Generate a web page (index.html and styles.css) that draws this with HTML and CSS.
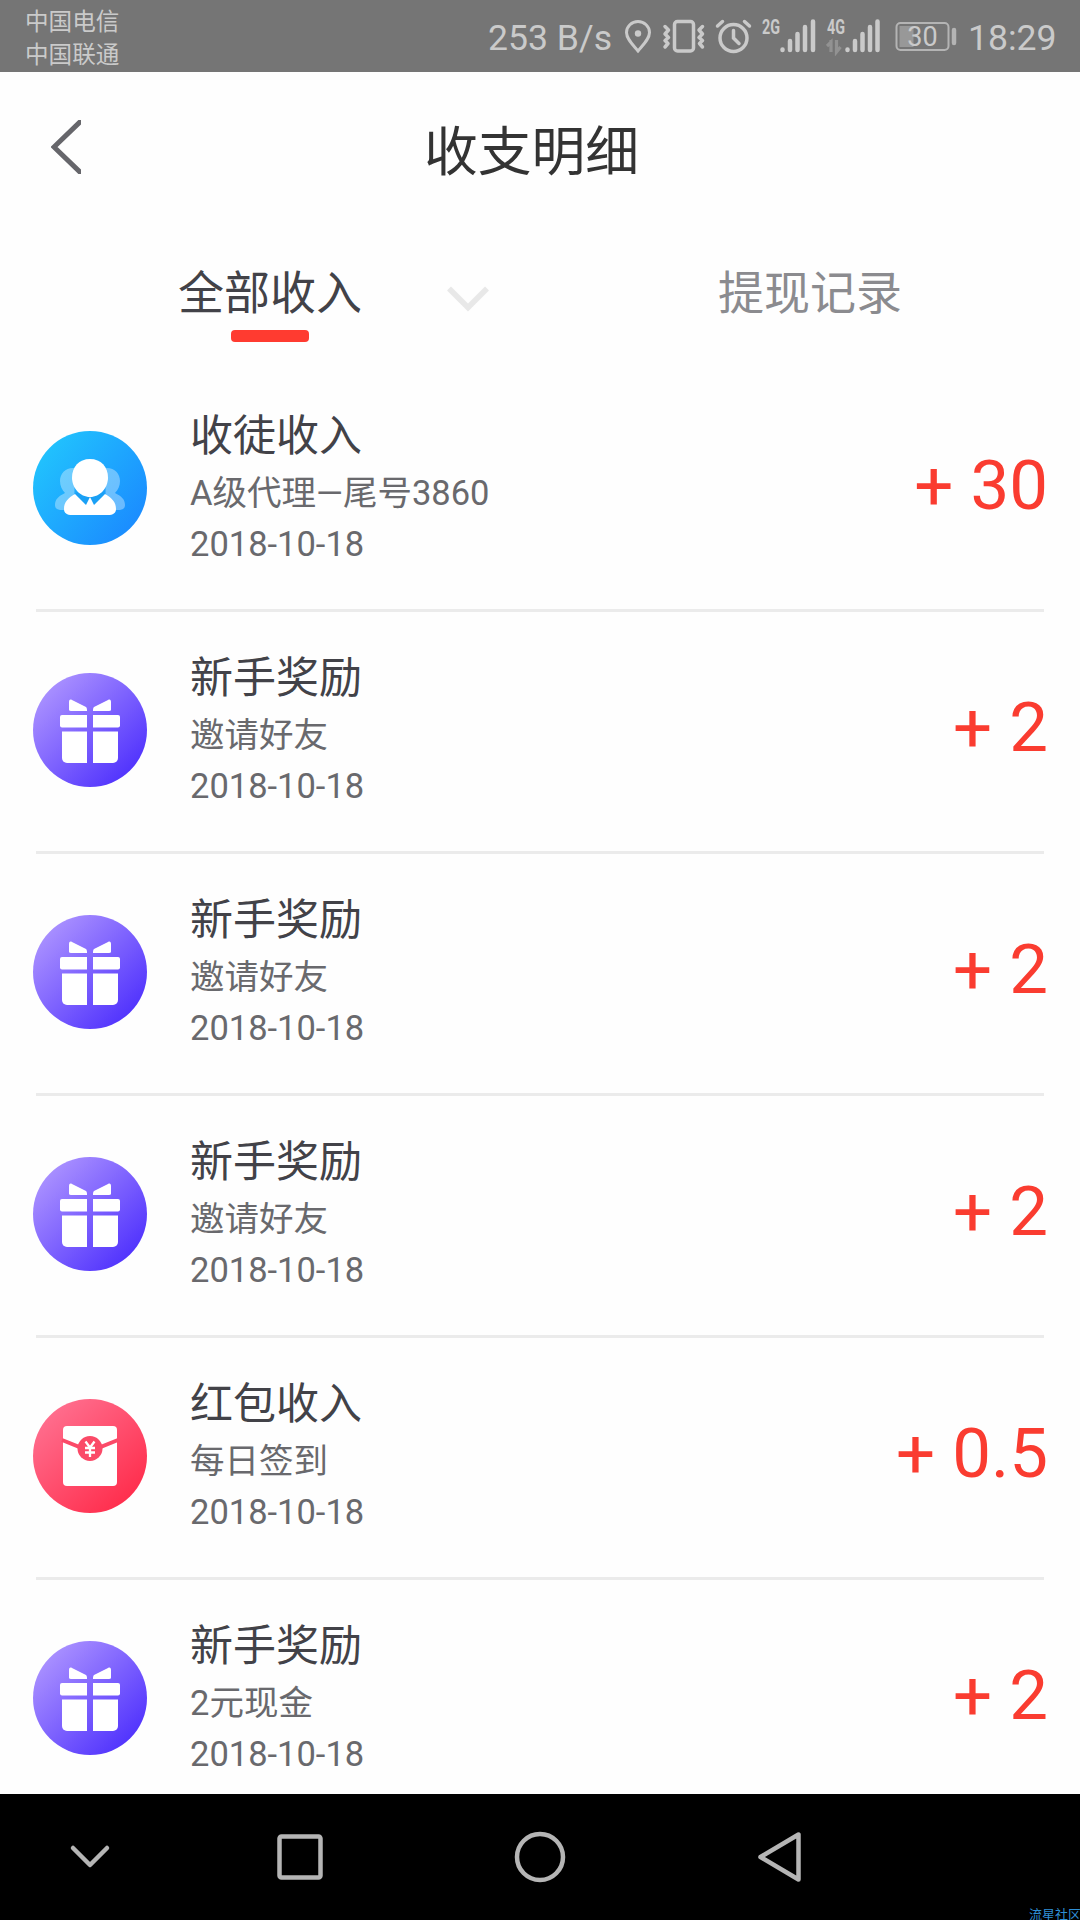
FILE: index.html
```
<!DOCTYPE html>
<html lang="zh-CN">
<head>
  <meta charset="UTF-8" />
  <meta name="viewport" content="width=device-width, initial-scale=1" />
  <title>收支明细</title>
  <link rel="stylesheet" href="styles.css">
</head>
<body>

  <!-- shared icons -->
  <svg class="defs" width="0" height="0">
    <defs>
      <linearGradient id="blue" x1="0" y1="0.1" x2="1" y2="0.9">
        <stop offset="0" stop-color="#22c8fd" />
        <stop offset="1" stop-color="#1a86ff" />
      </linearGradient>
      <linearGradient id="purple" x1="0.1" y1="0.1" x2="0.9" y2="0.9">
        <stop offset="0" stop-color="#ad94ff" />
        <stop offset="1" stop-color="#4d2ffd" />
      </linearGradient>
      <linearGradient id="red" x1="0.1" y1="0.1" x2="0.8" y2="0.9">
        <stop offset="0" stop-color="#ff7090" />
        <stop offset="1" stop-color="#ff2f4e" />
      </linearGradient>
    </defs>
    <symbol id="people" viewBox="0 0 114 114">
      <circle cx="57" cy="57" r="57" fill="url(#blue)" />
      <g fill="#fff" opacity="0.35">
        <path d="M42 37c-9-1-15 5-15 13 0 5 2 9 5 12-6 3-10 6-10 12 0 4 3 5 7 5h12z" />
        <path d="M72 37c9-1 15 5 15 13 0 5-2 9-5 12 6 3 10 6 10 12 0 4-3 5-7 5H73z" />
      </g>
      <path d="M41 64l12 10 4-8 4 8 12-10-6-6H47z" fill="#1aa0f5" />
      <path d="M42 63c-7 4-11 8-11 15 0 4 3 6 8 6h36c5 0 8-2 8-6 0-7-4-11-11-15L61 74l-4-8-4 8z" fill="#fff" />
      <path d="M57 28c11 0 18 8 18 18.500S67 66 57 66 39 57 39 46.500 46 28 57 28z" fill="#fff" />
    </symbol>
    <symbol id="gift" viewBox="0 0 114 114">
      <circle cx="57" cy="57" r="57" fill="url(#purple)" />
      <g fill="#fff">
        <path d="M36 29c0-2 1-3 3-2l14 7c1 1 1 2 1 4H38c-2 0-2-1-2-2z" />
        <path d="M78 29c0-2-1-3-3-2l-14 7c-1 1-1 2-1 4h16c2 0 2-1 2-2z" />
        <path d="M29 42h25v12.500H29a2 2 0 0 1-2-2V44a2 2 0 0 1 2-2z" />
        <path d="M60 42h25a2 2 0 0 1 2 2v8.500a2 2 0 0 1-2 2H60z" />
        <path d="M29 58.500h25V90H34a5 5 0 0 1-5-5z" />
        <path d="M60 58.500h25V85a5 5 0 0 1-5 5H60z" />
      </g>
    </symbol>
    <symbol id="packet" viewBox="0 0 114 114">
      <circle cx="57" cy="57" r="57" fill="url(#red)" />
      <rect x="30" y="27" width="54" height="60" rx="4" fill="#fff" />
      <path d="M29 41l20 8h16l20-8" fill="none" stroke="#fb4a68" stroke-width="4" />
      <circle cx="57" cy="49.500" r="12.500" fill="#fb4a68" />
      <path d="M52.500 42.500l4.500 6 4.500-6M57 48v10M52 49h10M52 53.500h10" fill="none" stroke="#fff" stroke-width="2.300" />
    </symbol>
  </svg>

  <div class="status-bar">
    <div class="carriers">
      <span>中国电信</span>
      <span>中国联通</span>
    </div>
    <div class="status-icons">
      <span class="speed">253 B/s</span>
      <!-- location -->
      <svg class="icon-location" width="28" height="40" viewBox="0 0 28 40" fill="none" stroke="#cacaca" stroke-width="3">
        <path d="M14 35C9 29 2.500 23 2.500 16.500a11.500 11 0 0 1 23 0C25.500 23 19 29 14 35z" />
        <circle cx="14" cy="17.500" r="3.200" fill="#cacaca" stroke="none" />
      </svg>
      <!-- vibrate -->
      <svg class="icon-vibrate" width="46" height="40" viewBox="0 0 46 40" fill="none" stroke="#cacaca" stroke-width="3.500" stroke-linecap="round" stroke-linejoin="round">
        <rect x="14.500" y="5.500" width="19" height="29.500" rx="3" />
        <path d="M5 10.500l3.500 3.500-3.500 4 3.500 3.500-3.500 3 3 3-3 3.500" />
        <path d="M42.500 10.500L39 14l3.500 4-3.500 3.500 3.500 3-3 3 3 3.500" />
      </svg>
      <!-- alarm -->
      <svg class="icon-alarm" width="38" height="40" viewBox="0 0 38 40" fill="none" stroke="#cacaca" stroke-width="3.500" stroke-linecap="round">
        <circle cx="19.500" cy="22" r="13.500" />
        <path d="M19.500 14.500V22l5.500 5.500M3.500 10l5-4.500M30.500 5.500l5 4.500" />
      </svg>
      <!-- 2G signal -->
      <svg class="icon-signal" width="54" height="40" viewBox="0 0 54 40">
        <text class="net" x="0" y="18" textLength="18" lengthAdjust="spacingAndGlyphs">2G</text>
        <path d="M20.500 33.500v.5M28 25v9M35.500 18v16M43 11v23M51 5.500V34" stroke="#cacaca" stroke-width="4.500" stroke-linecap="round" />
      </svg>
      <!-- 4G signal -->
      <svg class="icon-signal" width="55" height="40" viewBox="0 0 55 40">
        <text class="net" x="1" y="18" textLength="18" lengthAdjust="spacingAndGlyphs">4G</text>
        <path d="M5 36V26l-4 4M5 24v12M10.500 24v12l4-5" fill="none" stroke="#929292" stroke-width="3.200" />
        <path d="M21.500 33.500v.5M29 25v9M36.500 18v16M44 11v23M51.500 5.500V34" stroke="#cacaca" stroke-width="4.500" stroke-linecap="round" />
      </svg>
      <!-- battery -->
      <svg class="icon-battery" width="64" height="40" viewBox="0 0 64 40">
        <rect x="1.500" y="7" width="52" height="27" rx="4" fill="none" stroke="#b4b4b4" stroke-width="2" />
        <rect x="4.500" y="10" width="14" height="21" fill="#989898" />
        <text class="level" x="27.500" y="30" text-anchor="middle">30</text>
        <path d="M59 14v13" stroke="#b4b4b4" stroke-width="4.500" stroke-linecap="round" />
      </svg>
      <span class="time">18:29</span>
    </div>
  </div>

  <div class="header">
    <svg class="back" width="30" height="54" viewBox="0 0 30 54" fill="none" stroke="#66666b" stroke-width="5">
      <path d="M32 -1L3 27l29 28" />
    </svg>
    <h1>收支明细</h1>
  </div>

  <div class="tabs">
    <div class="tab active">
      <span class="label">全部收入</span>
      <svg class="arrow" width="44" height="28" viewBox="0 0 44 28" fill="none" stroke="#e8e8e8" stroke-width="5.500">
        <path d="M3 3.500l19 19 19-19" />
      </svg>
    </div>
    <div class="tab">
      <span class="label">提现记录</span>
    </div>
  </div>

  <div class="list">
    <div class="item">
      <svg class="avatar"><use href="#people" /></svg>
      <div class="info">
        <div class="name">收徒收入</div>
        <div class="desc">A级代理—尾号3860</div>
        <div class="date">2018-10-18</div>
      </div>
      <div class="amount">+ 30</div>
    </div>
    <div class="item">
      <svg class="avatar"><use href="#gift" /></svg>
      <div class="info">
        <div class="name">新手奖励</div>
        <div class="desc">邀请好友</div>
        <div class="date">2018-10-18</div>
      </div>
      <div class="amount">+ 2</div>
    </div>
    <div class="item">
      <svg class="avatar"><use href="#gift" /></svg>
      <div class="info">
        <div class="name">新手奖励</div>
        <div class="desc">邀请好友</div>
        <div class="date">2018-10-18</div>
      </div>
      <div class="amount">+ 2</div>
    </div>
    <div class="item">
      <svg class="avatar"><use href="#gift" /></svg>
      <div class="info">
        <div class="name">新手奖励</div>
        <div class="desc">邀请好友</div>
        <div class="date">2018-10-18</div>
      </div>
      <div class="amount">+ 2</div>
    </div>
    <div class="item">
      <svg class="avatar"><use href="#packet" /></svg>
      <div class="info">
        <div class="name">红包收入</div>
        <div class="desc">每日签到</div>
        <div class="date">2018-10-18</div>
      </div>
      <div class="amount">+ 0.5</div>
    </div>
    <div class="item">
      <svg class="avatar"><use href="#gift" /></svg>
      <div class="info">
        <div class="name">新手奖励</div>
        <div class="desc">2元现金</div>
        <div class="date">2018-10-18</div>
      </div>
      <div class="amount">+ 2</div>
    </div>
  </div>

  <div class="nav-bar">
    <svg width="180" height="126" viewBox="0 0 180 126">
      <path d="M73 54l17 17 17-17" />
    </svg>
    <svg width="240" height="126" viewBox="0 0 240 126">
      <rect x="99.500" y="42.500" width="41" height="41" rx="2" />
    </svg>
    <svg width="240" height="126" viewBox="0 0 240 126">
      <circle cx="120" cy="63" r="23" />
    </svg>
    <svg width="240" height="126" viewBox="0 0 240 126">
      <path d="M100.500 63L138.500 40.500v45z" />
    </svg>
    <span class="watermark">流星社区</span>
  </div>

</body>
</html>
```
FILE: styles.css
```
/* Reset & basics */
* {
  box-sizing: border-box;
}
body {
  margin: 0;
  width: 1080px;
  height: 1920px;
  overflow: hidden;
  display: flex;
  flex-direction: column;
  background: #fefefe;
  color: #424248;
  font-family: Roboto, "Noto Sans CJK SC", sans-serif;
}
svg {
  display: block;
  flex-shrink: 0;
}
.defs {
  position: absolute;
}

/* Status bar */
.status-bar {
  flex-shrink: 0;
  height: 72px;
  padding: 0 24px;
  display: flex;
  justify-content: space-between;
  background: #757575;
  color: #cacaca;
}
.carriers {
  display: flex;
  flex-direction: column;
  padding: 6px 0 0 1px;
  font-size: 23.600px;
  line-height: 33px;
}
.status-icons {
  display: flex;
  align-items: center;
  font-size: 35.600px;
}
.speed {
  width: 136px;
  padding-top: 3px;
  white-space: nowrap;
}
.icon-vibrate, .icon-alarm {
  margin-left: 8px;
}
.icon-signal {
  margin-left: 10px;
}
.icon-battery {
  margin-left: 14px;
}
.time {
  width: 88px;
  margin-left: 9px;
  padding-top: 3px;
  white-space: nowrap;
}
.net {
  font-size: 20px;
  font-weight: 700;
  fill: #cacaca;
}
.level {
  font-size: 27px;
  fill: #cacaca;
}

/* Header */
.header {
  flex-shrink: 0;
  height: 156px;
  display: grid;
  grid-template-columns: 1fr auto 1fr;
  align-items: center;
  padding-right: 17px;
}
.back {
  margin: -6px 0 0 51px;
}
.header h1 {
  margin: -6px 0 0;
  font-size: 53.800px;
  font-weight: 400;
  color: #333;
}

/* Tabs */
.tabs {
  flex-shrink: 0;
  height: 142px;
  padding-top: 33px;
  display: grid;
  grid-template-columns: 1fr 1fr;
}
.tab {
  display: grid;
  grid-template-columns: 1fr auto 1fr;
  align-content: start;
  font-size: 46px;
  line-height: 64px;
  color: #8b8b8f;
}
.label {
  grid-column: 2;
}
.arrow {
  margin: 24px 0 0 84px;
}
.active {
  color: #424248;
}
.active::after {
  content: "";
  grid-column: 2;
  justify-self: center;
  width: 78px;
  height: 12px;
  margin-top: 5px;
  border-radius: 4px;
  background: #ff3b30;
}

/* Income list */
.list {
  flex: 1;
  min-height: 0;
  overflow: hidden;
  padding: 0 36px;
}
.item {
  height: 242px;
  display: flex;
  align-items: center;
  border-bottom: 3px solid #ebebeb;
}
.avatar {
  width: 114px;
  height: 114px;
  margin: 0 43px 3px -3px;
}
.info {
  flex: 1;
  padding-bottom: 6px;
}
.name {
  font-size: 43px;
  line-height: 60px;
}
.desc, .date {
  font-size: 34.500px;
  color: #69696d;
}
.desc {
  line-height: 54px;
}
.date {
  line-height: 48px;
}
.amount {
  margin: 0 -4px 8px 0;
  font-size: 69px;
  line-height: 80px;
  color: #fa3c30;
}

/* Navigation bar */
.nav-bar {
  position: relative;
  flex-shrink: 0;
  height: 126px;
  display: flex;
  background: #000;
  overflow: hidden;
}
.nav-bar svg {
  fill: none;
  stroke: #b5b5b5;
  stroke-width: 4.500;
  stroke-linecap: round;
  stroke-linejoin: round;
}
.watermark {
  position: absolute;
  left: 1029px;
  top: 113px;
  font-size: 13px;
  line-height: 16px;
  color: #2f8fd6;
  white-space: nowrap;
}
```
